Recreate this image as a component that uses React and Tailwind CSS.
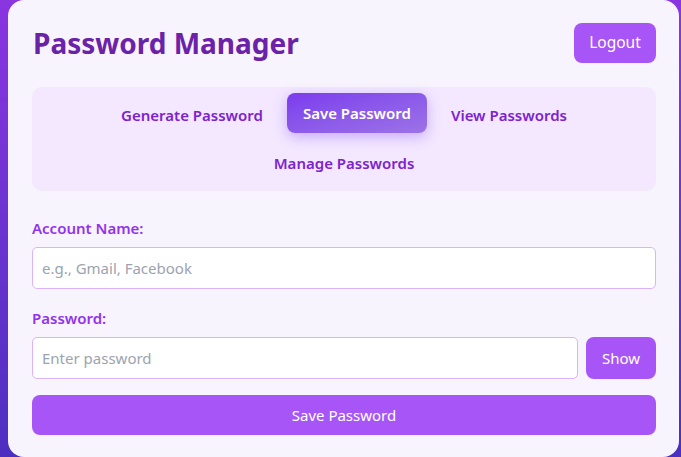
import React from "react";

export default function App() {
  const font = { fontFamily: '"Segoe UI", "Noto Sans", "Open Sans", sans-serif' };
  return (
    <div
      className="w-[681px] h-[457px] overflow-hidden bg-gradient-to-b from-[#8a35e0] to-[#4c2fc0] pl-[8px]"
      style={font}
    >
      <div className="w-[671px] h-[457px] rounded-[16px] bg-[#f7f4fd] pt-[23px] pl-[24px] pr-[23px]">
        <div className="flex items-center justify-between h-[40px]">
          <h1 className="text-[28px] font-bold text-[#6b21a8] leading-none ml-[1px]">Password Manager</h1>
          <button className="w-[82px] h-[40px] rounded-[8px] bg-[#a855f7] text-white text-[15.5px]">Logout</button>
        </div>
        <div className="mt-[24px] h-[104px] rounded-[10px] bg-[#f3e8ff] p-[8px] flex flex-wrap justify-center gap-[8px]">
          <button className="h-[40px] px-[16px] rounded-[8px] text-[15px] font-semibold text-[#7e22ce]">Generate Password</button>
          <button className="h-[40px] px-[16px] rounded-[8px] text-[15px] font-semibold text-white bg-gradient-to-br from-[#7c3aed] to-[#9d72e6] shadow-[0_4px_14px_rgba(124,58,237,0.35)] -translate-y-[2px]">Save Password</button>
          <button className="h-[40px] px-[16px] rounded-[8px] text-[15px] font-semibold text-[#7e22ce]">View Passwords</button>
          <button className="h-[40px] px-[16px] rounded-[8px] text-[15px] font-semibold text-[#7e22ce]">Manage Passwords</button>
        </div>
        <div className="mt-[27px]">
          <label className="block h-[20px] leading-[20px] text-[15px] font-semibold text-[#9333ea]">Account Name:</label>
          <input
            className="mt-[9px] w-full h-[42px] rounded-[5px] border border-[#d8b4fe] bg-white px-[9px] text-[15px] placeholder-[#9ca3af] outline-none"
            placeholder="e.g., Gmail, Facebook"
          />
        </div>
        <div className="mt-[19px]">
          <label className="block h-[20px] leading-[20px] text-[15px] font-semibold text-[#9333ea]">Password:</label>
          <div className="mt-[9px] flex gap-[8px]">
            <input
              className="flex-1 h-[42px] rounded-[5px] border border-[#d8b4fe] bg-white px-[9px] text-[15px] placeholder-[#9ca3af] outline-none"
              placeholder="Enter password"
              type="password"
            />
            <button className="w-[70px] h-[42px] rounded-[8px] bg-[#a855f7] text-white text-[15px]">Show</button>
          </div>
        </div>
        <button className="mt-[16px] w-full h-[40px] rounded-[8px] bg-[#a855f7] text-white text-[15px]">Save Password</button>
      </div>
    </div>
  );
}
